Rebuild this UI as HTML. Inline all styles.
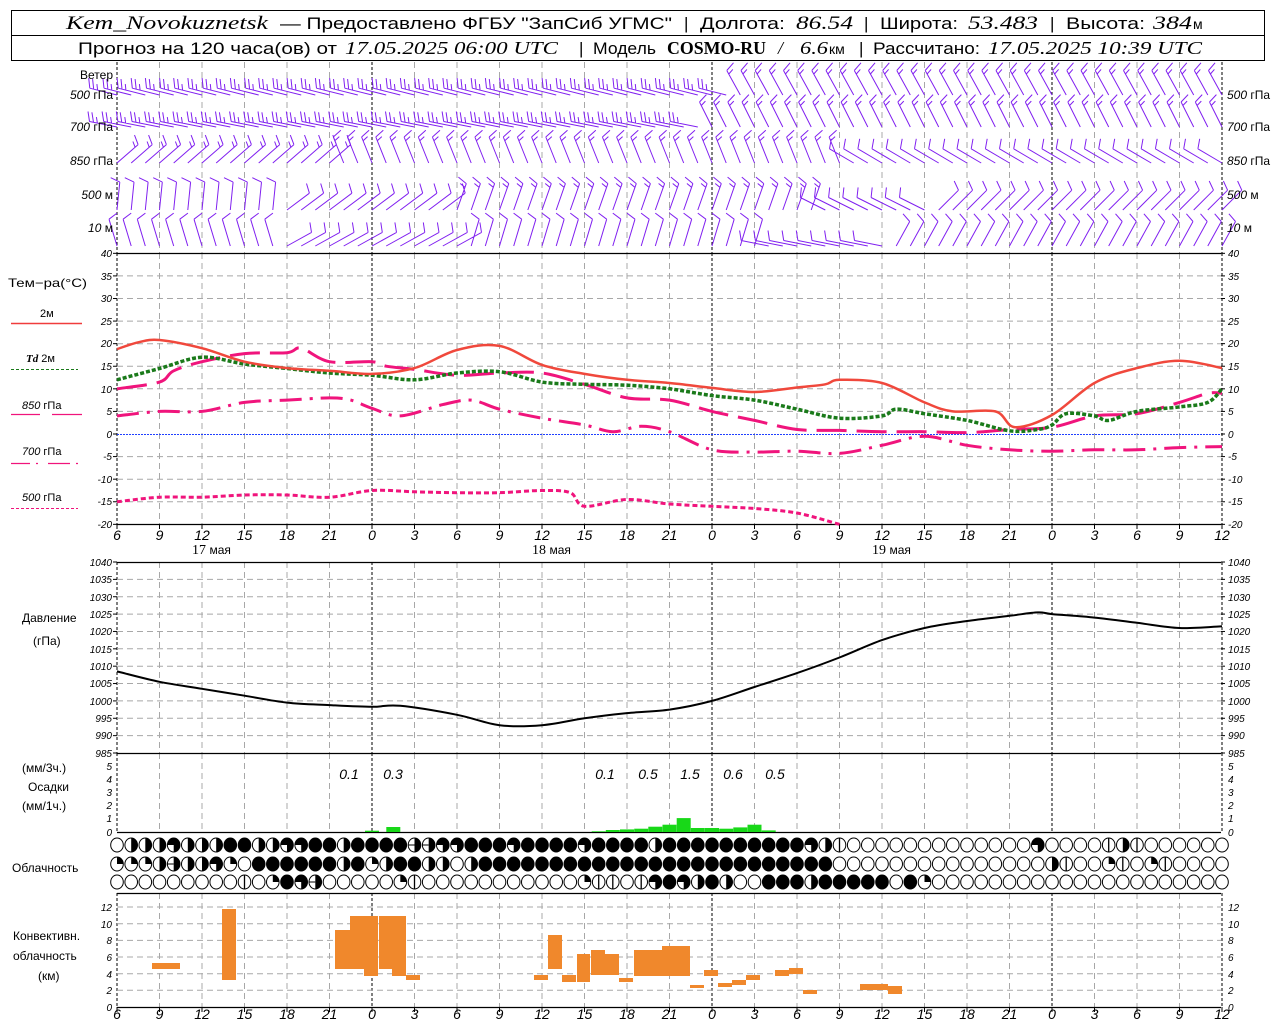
<!DOCTYPE html>
<html><head><meta charset="utf-8"><style>
html,body{margin:0;padding:0;background:#fff;width:1280px;height:1024px;overflow:hidden}
svg{display:block}
text{font-family:"Liberation Sans",sans-serif;fill:#000}
.h{font-size:17px}
.i{font-family:"Liberation Serif",serif;font-style:italic}
.tk{font-size:10px;font-style:italic;font-family:"Liberation Sans",sans-serif}
.tx{font-size:14px;font-style:italic;font-family:"Liberation Serif",serif}
.lb{font-size:12px}
</style></head><body>
<svg id="s" width="1280" height="1024" viewBox="0 0 1280 1024" xmlns="http://www.w3.org/2000/svg">
<rect x="11.5" y="10.5" width="1253" height="50" fill="none" stroke="#000"/>
<line x1="11" y1="35.5" x2="1265" y2="35.5" stroke="#000"/>
<g class="h">
<text x="66" y="29" class="i" font-size="19" textLength="202" lengthAdjust="spacingAndGlyphs">Kem_Novokuznetsk</text>
<text x="280" y="29" textLength="392" lengthAdjust="spacingAndGlyphs">— Предоставлено ФГБУ "ЗапСиб УГМС"</text>
<text x="684" y="29">|</text>
<text x="700" y="29" textLength="85" lengthAdjust="spacingAndGlyphs">Долгота:</text>
<text x="796" y="29" class="i" font-size="19" textLength="57" lengthAdjust="spacingAndGlyphs">86.54</text>
<text x="864" y="29">|</text>
<text x="880" y="29" textLength="78" lengthAdjust="spacingAndGlyphs">Широта:</text>
<text x="968" y="29" class="i" font-size="19" textLength="70" lengthAdjust="spacingAndGlyphs">53.483</text>
<text x="1050" y="29">|</text>
<text x="1066" y="29" textLength="79" lengthAdjust="spacingAndGlyphs">Высота:</text>
<text x="1153" y="29" class="i" font-size="19" textLength="39" lengthAdjust="spacingAndGlyphs">384</text>
<text x="1193" y="29" font-size="14">м</text>
<text x="78" y="54" textLength="259" lengthAdjust="spacingAndGlyphs">Прогноз на 120 часа(ов) от</text>
<text x="345" y="54" class="i" font-size="18" textLength="213" lengthAdjust="spacingAndGlyphs">17.05.2025 06:00 UTC</text>
<text x="579" y="54">|</text>
<text x="593" y="54" textLength="63" lengthAdjust="spacingAndGlyphs">Модель</text>
<text x="667" y="54" font-weight="bold" font-size="18" textLength="99" lengthAdjust="spacingAndGlyphs" style="font-family:'Liberation Serif',serif">COSMO-RU</text>
<text x="778" y="54" class="i" font-size="18">/</text>
<text x="800" y="54" class="i" font-size="18" textLength="28" lengthAdjust="spacingAndGlyphs">6.6</text>
<text x="829" y="54" font-size="14">км</text>
<text x="859" y="54">|</text>
<text x="873" y="54" textLength="107" lengthAdjust="spacingAndGlyphs">Рассчитано:</text>
<text x="988" y="54" class="i" font-size="18" textLength="214" lengthAdjust="spacingAndGlyphs">17.05.2025 10:39 UTC</text>
</g>
<g id="geo"></g>
<g class="lb" font-size="11">
<text x="113" y="79" text-anchor="end">Ветер</text>
<text x="113" y="99" text-anchor="end"><tspan font-style="italic">500</tspan> гПа</text>
<text x="113" y="131" text-anchor="end"><tspan font-style="italic">700</tspan> гПа</text>
<text x="113" y="165" text-anchor="end"><tspan font-style="italic">850</tspan> гПа</text>
<text x="113" y="199" text-anchor="end"><tspan font-style="italic">500</tspan> м</text>
<text x="113" y="232" text-anchor="end"><tspan font-style="italic">10</tspan>   м</text>
<text x="1227" y="99"><tspan font-style="italic">500</tspan> гПа</text>
<text x="1227" y="131"><tspan font-style="italic">700</tspan> гПа</text>
<text x="1227" y="165"><tspan font-style="italic">850</tspan> гПа</text>
<text x="1227" y="199"><tspan font-style="italic">500</tspan> м</text>
<text x="1227" y="232"><tspan font-style="italic">10</tspan>   м</text>
</g>
<g class="lb">
<text x="8" y="287" textLength="79" lengthAdjust="spacingAndGlyphs">Тем−ра(°С)</text>
<text x="40" y="317" font-size="11">2м</text>
<line x1="11" y1="323.5" x2="82" y2="323.5" stroke="#f03c3c" stroke-width="1.5"/>
<text x="26" y="362" font-size="11"><tspan class="i" font-weight="bold">Td</tspan>  2м</text>
<line x1="11" y1="369.5" x2="78" y2="369.5" stroke="#1a7a1a" stroke-dasharray="3,2"/>
<text x="22" y="409" font-size="11"><tspan font-style="italic">850</tspan> гПа</text>
<path d="M11 414.5H40M52 414.5H82" stroke="#f0147c" stroke-width="1.2"/>
<text x="22" y="455" font-size="11"><tspan font-style="italic">700</tspan> гПа</text>
<path d="M11 463.5H30M36 463.5H38M48 463.5H70M76 463.5H78" stroke="#f0147c" stroke-width="1.2"/>
<text x="22" y="501" font-size="11"><tspan font-style="italic">500</tspan> гПа</text>
<line x1="11" y1="508.5" x2="78" y2="508.5" stroke="#f0147c" stroke-dasharray="3,2"/>
<text x="192" y="554" font-size="14" style="font-family:'Liberation Serif',serif">17 <tspan font-size="12" style="font-family:'Liberation Sans',sans-serif">мая</tspan></text>
<text x="532" y="554" font-size="14" style="font-family:'Liberation Serif',serif">18 <tspan font-size="12" style="font-family:'Liberation Sans',sans-serif">мая</tspan></text>
<text x="872" y="554" font-size="14" style="font-family:'Liberation Serif',serif">19 <tspan font-size="12" style="font-family:'Liberation Sans',sans-serif">мая</tspan></text>
<text x="22" y="622">Давление</text>
<text x="33" y="645">(гПа)</text>
<text x="22" y="772">(мм/3ч.)</text>
<text x="28" y="791">Осадки</text>
<text x="22" y="810">(мм/1ч.)</text>
<text x="12" y="872">Облачность</text>
<text x="13" y="940">Конвективн.</text>
<text x="13" y="960">облачность</text>
<text x="38" y="980">(км)</text>
</g>
<g class="tx" font-size="14">
<text x="349" y="779" text-anchor="middle">0.1</text><text x="393" y="779" text-anchor="middle">0.3</text>
<text x="605" y="779" text-anchor="middle">0.1</text><text x="648" y="779" text-anchor="middle">0.5</text>
<text x="690" y="779" text-anchor="middle">1.5</text><text x="733" y="779" text-anchor="middle">0.6</text>
<text x="775" y="779" text-anchor="middle">0.5</text>
</g>
<g class="tx" text-anchor="middle">
<text x="117" y="540">6</text><text x="159.5" y="540">9</text><text x="202" y="540">12</text><text x="244.5" y="540">15</text><text x="287" y="540">18</text><text x="329.5" y="540">21</text><text x="372" y="540">0</text><text x="414.5" y="540">3</text><text x="457" y="540">6</text><text x="499.5" y="540">9</text><text x="542" y="540">12</text><text x="584.5" y="540">15</text><text x="627" y="540">18</text><text x="669.5" y="540">21</text><text x="712" y="540">0</text><text x="754.5" y="540">3</text><text x="797" y="540">6</text><text x="839.5" y="540">9</text><text x="882" y="540">12</text><text x="924.5" y="540">15</text><text x="967" y="540">18</text><text x="1009.5" y="540">21</text><text x="1052" y="540">0</text><text x="1094.5" y="540">3</text><text x="1137" y="540">6</text><text x="1179.5" y="540">9</text><text x="1222" y="540">12</text>
<text x="117" y="1019">6</text><text x="159.5" y="1019">9</text><text x="202" y="1019">12</text><text x="244.5" y="1019">15</text><text x="287" y="1019">18</text><text x="329.5" y="1019">21</text><text x="372" y="1019">0</text><text x="414.5" y="1019">3</text><text x="457" y="1019">6</text><text x="499.5" y="1019">9</text><text x="542" y="1019">12</text><text x="584.5" y="1019">15</text><text x="627" y="1019">18</text><text x="669.5" y="1019">21</text><text x="712" y="1019">0</text><text x="754.5" y="1019">3</text><text x="797" y="1019">6</text><text x="839.5" y="1019">9</text><text x="882" y="1019">12</text><text x="924.5" y="1019">15</text><text x="967" y="1019">18</text><text x="1009.5" y="1019">21</text><text x="1052" y="1019">0</text><text x="1094.5" y="1019">3</text><text x="1137" y="1019">6</text><text x="1179.5" y="1019">9</text><text x="1222" y="1019">12</text>
</g>
<g class="tk" text-anchor="end">
<text x="112" y="257">40</text><text x="112" y="280">35</text><text x="112" y="302">30</text><text x="112" y="325">25</text><text x="112" y="347">20</text><text x="112" y="370">15</text><text x="112" y="393">10</text><text x="112" y="415">5</text><text x="112" y="438">0</text><text x="112" y="460">-5</text><text x="112" y="483">-10</text><text x="112" y="505">-15</text><text x="112" y="528">-20</text>
<text x="112" y="566">1040</text><text x="112" y="583">1035</text><text x="112" y="601">1030</text><text x="112" y="618">1025</text><text x="112" y="635">1020</text><text x="112" y="653">1015</text><text x="112" y="670">1010</text><text x="112" y="687">1005</text><text x="112" y="705">1000</text><text x="112" y="722">995</text><text x="112" y="739">990</text><text x="112" y="757">985</text>
<text x="112" y="770">5</text><text x="112" y="783">4</text><text x="112" y="796">3</text><text x="112" y="809">2</text><text x="112" y="822">1</text><text x="112" y="836">0</text>
<text x="112" y="911">12</text><text x="112" y="928">10</text><text x="112" y="944">8</text><text x="112" y="961">6</text><text x="112" y="978">4</text><text x="112" y="994">2</text><text x="112" y="1011">0</text>
</g>
<g class="tk">
<text x="1228" y="257">40</text><text x="1228" y="280">35</text><text x="1228" y="302">30</text><text x="1228" y="325">25</text><text x="1228" y="347">20</text><text x="1228" y="370">15</text><text x="1228" y="393">10</text><text x="1228" y="415">5</text><text x="1228" y="438">0</text><text x="1228" y="460">-5</text><text x="1228" y="483">-10</text><text x="1228" y="505">-15</text><text x="1228" y="528">-20</text>
<text x="1228" y="566">1040</text><text x="1228" y="583">1035</text><text x="1228" y="601">1030</text><text x="1228" y="618">1025</text><text x="1228" y="635">1020</text><text x="1228" y="653">1015</text><text x="1228" y="670">1010</text><text x="1228" y="687">1005</text><text x="1228" y="705">1000</text><text x="1228" y="722">995</text><text x="1228" y="739">990</text><text x="1228" y="757">985</text>
<text x="1228" y="770">5</text><text x="1228" y="783">4</text><text x="1228" y="796">3</text><text x="1228" y="809">2</text><text x="1228" y="822">1</text><text x="1228" y="836">0</text>
<text x="1228" y="911">12</text><text x="1228" y="928">10</text><text x="1228" y="944">8</text><text x="1228" y="961">6</text><text x="1228" y="978">4</text><text x="1228" y="994">2</text><text x="1228" y="1011">0</text>
</g>
</svg>
<script>
(function(){
var g=document.getElementById("geo"),out=[];
function X(h){return 117+h*14.1667;}
function L(a){out.push(a);}
var GR='stroke="#a8a8a8" stroke-dasharray="6,4" stroke-width="1"';
var panels=[[62,253],[253,524],[562,753],[753,832],[893,1007]];
for(var i=0;i<=26;i++){var x=X(i*3).toFixed(1);var day=(i*3)%24==18;
 panels.forEach(function(p){
  if(i==0||i==26||day)L('<line x1="'+x+'" y1="'+p[0]+'" x2="'+x+'" y2="'+p[1]+'" stroke="#000" stroke-dasharray="3,2"/>');
  else L('<line x1="'+x+'" y1="'+p[0]+'" x2="'+x+'" y2="'+p[1]+'" '+GR+'/>');
 });
 L('<line x1="'+x+'" y1="524" x2="'+x+'" y2="529" stroke="#000"/>');
 L('<line x1="'+x+'" y1="1007" x2="'+x+'" y2="1012" stroke="#000"/>');
}
function hgrid(y){L('<line x1="117" y1="'+y+'" x2="1221" y2="'+y+'" '+GR+'/>');}
function ty(T){return 434-T*4.517;}
for(var T=35;T>=-15;T-=5){if(T!=0)hgrid(ty(T).toFixed(1));}
function py(P){return 753-(P-985)*3.4727;}
for(var P=1035;P>985;P-=5)hgrid(py(P).toFixed(1));
function cy(k){return 1007-k*8.33;}
for(var k=2;k<=12;k+=2)hgrid(cy(k).toFixed(1));
[253,524,562,753,832,893,1007].forEach(function(y){L('<line x1="117" y1="'+(y+.5)+'" x2="1221" y2="'+(y+.5)+'" stroke="#000" stroke-width="1.2"/>');});
L('<line x1="117" y1="434.5" x2="1221" y2="434.5" stroke="#2040ff" stroke-dasharray="2,1"/>');
for(var T=40;T>=-20;T-=5){var y=ty(T);L('<line x1="113" y1="'+y+'" x2="117" y2="'+y+'" stroke="#000"/><line x1="1221" y1="'+y+'" x2="1225" y2="'+y+'" stroke="#000"/>');}
for(var P=1040;P>=985;P-=5){var y=py(P);L('<line x1="113" y1="'+y+'" x2="117" y2="'+y+'" stroke="#000"/><line x1="1221" y1="'+y+'" x2="1225" y2="'+y+'" stroke="#000"/>');}
function curve(pts,fy,attr){var P=[];
 for(var j=0;j<pts.length;j+=2)P.push([X(pts[j]),fy(pts[j+1])]);
 var d="M"+P[0][0].toFixed(1)+" "+P[0][1].toFixed(1);
 for(var i=0;i<P.length-1;i++){var p0=P[Math.max(0,i-1)],p1=P[i],p2=P[i+1],p3=P[Math.min(P.length-1,i+2)];
  var c1x=p1[0]+(p2[0]-p0[0])/6,c1y=p1[1]+(p2[1]-p0[1])/6,c2x=p2[0]-(p3[0]-p1[0])/6,c2y=p2[1]-(p3[1]-p1[1])/6;
  d+="C"+c1x.toFixed(1)+" "+c1y.toFixed(1)+" "+c2x.toFixed(1)+" "+c2y.toFixed(1)+" "+p2[0].toFixed(1)+" "+p2[1].toFixed(1);}
 L('<path d="'+d+'" fill="none" '+attr+'/>');}
var t500=[0,-15,3,-14,6,-14,9,-13.5,12,-13.5,15,-14,18,-12.5,21,-12.8,24,-13,27,-13,30,-12.5,32,-13,33,-16,36,-14.5,39,-15.5,42,-16,45,-16.5,48,-17.5,51,-20];
var t700=[0,4,3,5,6,5,9,7,12,7.5,15,8,16.5,7.5,18,5.7,20,4,23,6.5,25,7.5,27,5.5,30,3.5,33,2,35,0.5,37,1.7,39,0.5,42,-3.5,45,-4,48,-3.8,51,-4.3,54,-2.5,57,-0.5,60,-2.5,63,-3.5,66,-3.8,69,-3.5,72,-3.5,75,-3,78,-2.8];
var t850=[0,10,3,11.5,4,14,6,16,9,17.8,12,18,13,19,15,16,18,16,19,15,21,14.3,24,13,27,13.5,30,13.5,33,11,36,8,39,7.5,42,5,45,3,48,1,51,0.8,54,0.5,57,0.5,60,0.3,63,1,66,1.5,69,4,72,4.5,75,7,77,9,78,9];
var td=[0,12,3,14.5,6,17,9,15.5,12,14.5,15,13.5,18,13,21,12,24,13.5,27,13.8,30,11.5,33,11,36,10.8,39,10,42,8.5,45,7.5,48,5.5,51,3.5,54,4,55,5.5,57,4.5,60,3,63,0.7,65,1,66,2,67,4.5,69,4,70,3,72,5,75,6,77,7,78,10];
var t2=[0,18.8,1.5,20.3,3,20.8,6,19,9,16,12,14.6,15,14,18,13.3,21,14.6,24,18.6,27,19.5,30,15.3,33,13.3,36,12,39,11.3,42,10.2,45,9.3,48,10.3,50,11,51,12,54,11.3,57,7,59,5,62,5,63.4,1.5,66,4.2,69,11.3,72,14.6,75,16.2,78,14.6];
curve(t500,ty,'stroke="#f0147c" stroke-width="3" stroke-dasharray="5,3"');
curve(t700,ty,'stroke="#f0147c" stroke-width="3" stroke-dasharray="22,8,3,8"');
curve(t850,ty,'stroke="#f0147c" stroke-width="3" stroke-dasharray="30,10"');
curve(td,ty,'stroke="#1a7a1a" stroke-width="3.5" stroke-dasharray="4,2"');
curve(t2,ty,'stroke="#f0483c" stroke-width="2.5"');
var pr=[0,1008.5,3,1005.5,6,1003.5,9,1001.5,12,999.5,15,998.8,18,998.3,20,998.6,24,996,27,993,30,993,33,995,36,996.5,39,997.5,42,1000,45,1004,48,1008,51,1012.5,54,1017.5,57,1021,60,1023,63,1024.5,65,1025.5,66,1025,69,1024,72,1022.5,75,1021,78,1021.5];
curve(pr,py,'stroke="#000" stroke-width="2"');
var pb=[[18,0.1],[19.5,0.38],[34,0.05],[35,0.15],[36,0.2],[37,0.25],[38,0.4],[39,0.55],[40,1.05],[41,0.3],[42,0.3],[43,0.25],[44,0.35],[45,0.55],[46,0.12]];
pb.forEach(function(b){var x=X(b[0])-7,h=b[1]*13.2;L('<rect x="'+x.toFixed(1)+'" y="'+(832-h).toFixed(1)+'" width="14" height="'+h.toFixed(1)+'" fill="#18d818"/>');});
var cb=[[152,180,963,969],[222,236,909,980],[335,350,930,969],[350,364,916,969],[364,378,916,976],[379,392,916,969],[392,406,916,976],[406,420,975,980],[534,548,975,980],[548,562,935,969],[562,576,975,982],[577,590,954,982],[591,605,950,975],[605,619,954,975],[619,633,978,982],[634,648,950,976],[648,662,950,976],[662,676,946,976],[676,690,946,976],[690,704,985,988],[704,718,970,976],[718,732,983,987],[732,746,980,985],[746,760,975,980],[775,789,970,976],[789,803,968,974],[803,817,990,994],[860,874,984,990],[874,888,984,990],[888,902,986,994]];
cb.forEach(function(b){L('<rect x="'+b[0]+'" y="'+b[2]+'" width="'+(b[1]-b[0])+'" height="'+(b[3]-b[2])+'" fill="#f0882c"/>');});
function pad(s){while(s.length<79)s+="0";return s.slice(0,79);}
var r1=pad("02223222442233442444"+"4hh3344434444"+"3444424444444444"+"32v"+"0000000000000"+"3"+"0000v2v0000");
var r2=pad("1112h22310"+"4444442412"+"4422024444"+"4444444444"+"4444444444"+"4"+"000000000000000"+"2v001v01v00");
var r3=pad("000000000v"+"0143h00000"+"1v00000000"+"0001vv0v34"+"3242004442"+"44444041"+"0");
function circ(cx,cy,c){var rx=6.3,ry=7;
 var s='<ellipse cx="'+cx+'" cy="'+cy+'" rx="'+rx+'" ry="'+ry+'" fill="'+(c=="4"?"#000":"#fff")+'" stroke="#000" stroke-width="1"/>';
 if(c=="1")s+='<path d="M'+cx+' '+cy+'V'+(cy-ry)+'A'+rx+' '+ry+' 0 0 1 '+(cx+rx)+' '+cy+'Z"/>';
 if(c=="2")s+='<path d="M'+cx+' '+(cy-ry)+'A'+rx+' '+ry+' 0 0 1 '+cx+' '+(cy+ry)+'Z"/>';
 if(c=="3")s+='<path d="M'+cx+' '+cy+'H'+(cx-rx)+'A'+rx+' '+ry+' 0 1 1 '+cx+' '+(cy+ry)+'Z"/>';
 if(c=="h")s+='<path d="M'+cx+' '+(cy-ry)+'A'+rx+' '+ry+' 0 0 1 '+cx+' '+(cy+ry)+'Z"/><line x1="'+(cx-rx)+'" y1="'+cy+'" x2="'+cx+'" y2="'+cy+'" stroke="#000"/>';
 if(c=="v")s+='<line x1="'+cx+'" y1="'+(cy-ry)+'" x2="'+cx+'" y2="'+(cy+ry)+'" stroke="#000" stroke-width="1.3"/>';
 return s;}
[[r1,845],[r2,864],[r3,882]].forEach(function(r){for(var i=0;i<79;i++)L(circ(+X(i).toFixed(1),r[1],r[0][i]));});
function dir(lev,h){
 if(lev==0){return h<44?[-1,-0.25,3]:[-0.55,-1,2];}
 if(lev==1){return h<42?[-1,-0.2,3]:[-0.5,-1,2];}
 if(lev==2){if(h<16)return[0.8,-0.7,2];if(h<52)return[-0.4,-1,2];return[-0.85,-0.5,1];}
 if(lev==3){if(h<12)return[0.1,-1,1];if(h<24)return[0.8,-0.6,1];if(h<50)return[0.35,-1,2];if(h<58)return[-0.9,-0.45,1];return[0.75,-0.75,1];}
 if(h<12)return[-0.3,-1,1];if(h<25)return[0.9,-0.5,1];if(h<46)return[0.3,-1,1];if(h<55)return[-1,-0.2,1];return[0.55,-1,1];
}
var by=[95,127,163,210,246],d="";
for(var lev=0;lev<5;lev++)for(var h=0;h<=78;h++){
 var v=dir(lev,h),n=Math.sqrt(v[0]*v[0]+v[1]*v[1]),ux=v[0]/n,uy=v[1]/n,len=28;
 var x0=X(h),y0=by[lev],x1=x0+ux*len,y1=y0+uy*len;
 d+="M"+x0.toFixed(1)+" "+y0.toFixed(1)+"L"+x1.toFixed(1)+" "+y1.toFixed(1);
 var fx=-uy,fy=ux;
 if(fy>0){fx=-fx;fy=-fy;}
 for(var k=0;k<v[2];k++){var bx=x1-ux*k*4,byy=y1-uy*k*4,fl=(k==v[2]-1&&v[2]>1)?6:10;
  var ex=bx+(fx*0.95+ux*0.35)*fl,ey=byy+(fy*0.95+uy*0.35)*fl;
  d+="M"+bx.toFixed(1)+" "+byy.toFixed(1)+"L"+ex.toFixed(1)+" "+ey.toFixed(1);}
}
L('<path d="'+d+'" stroke="#8020f0" stroke-width="1" fill="none"/>');
g.innerHTML=out.join("");
})();
</script>
</body></html>
